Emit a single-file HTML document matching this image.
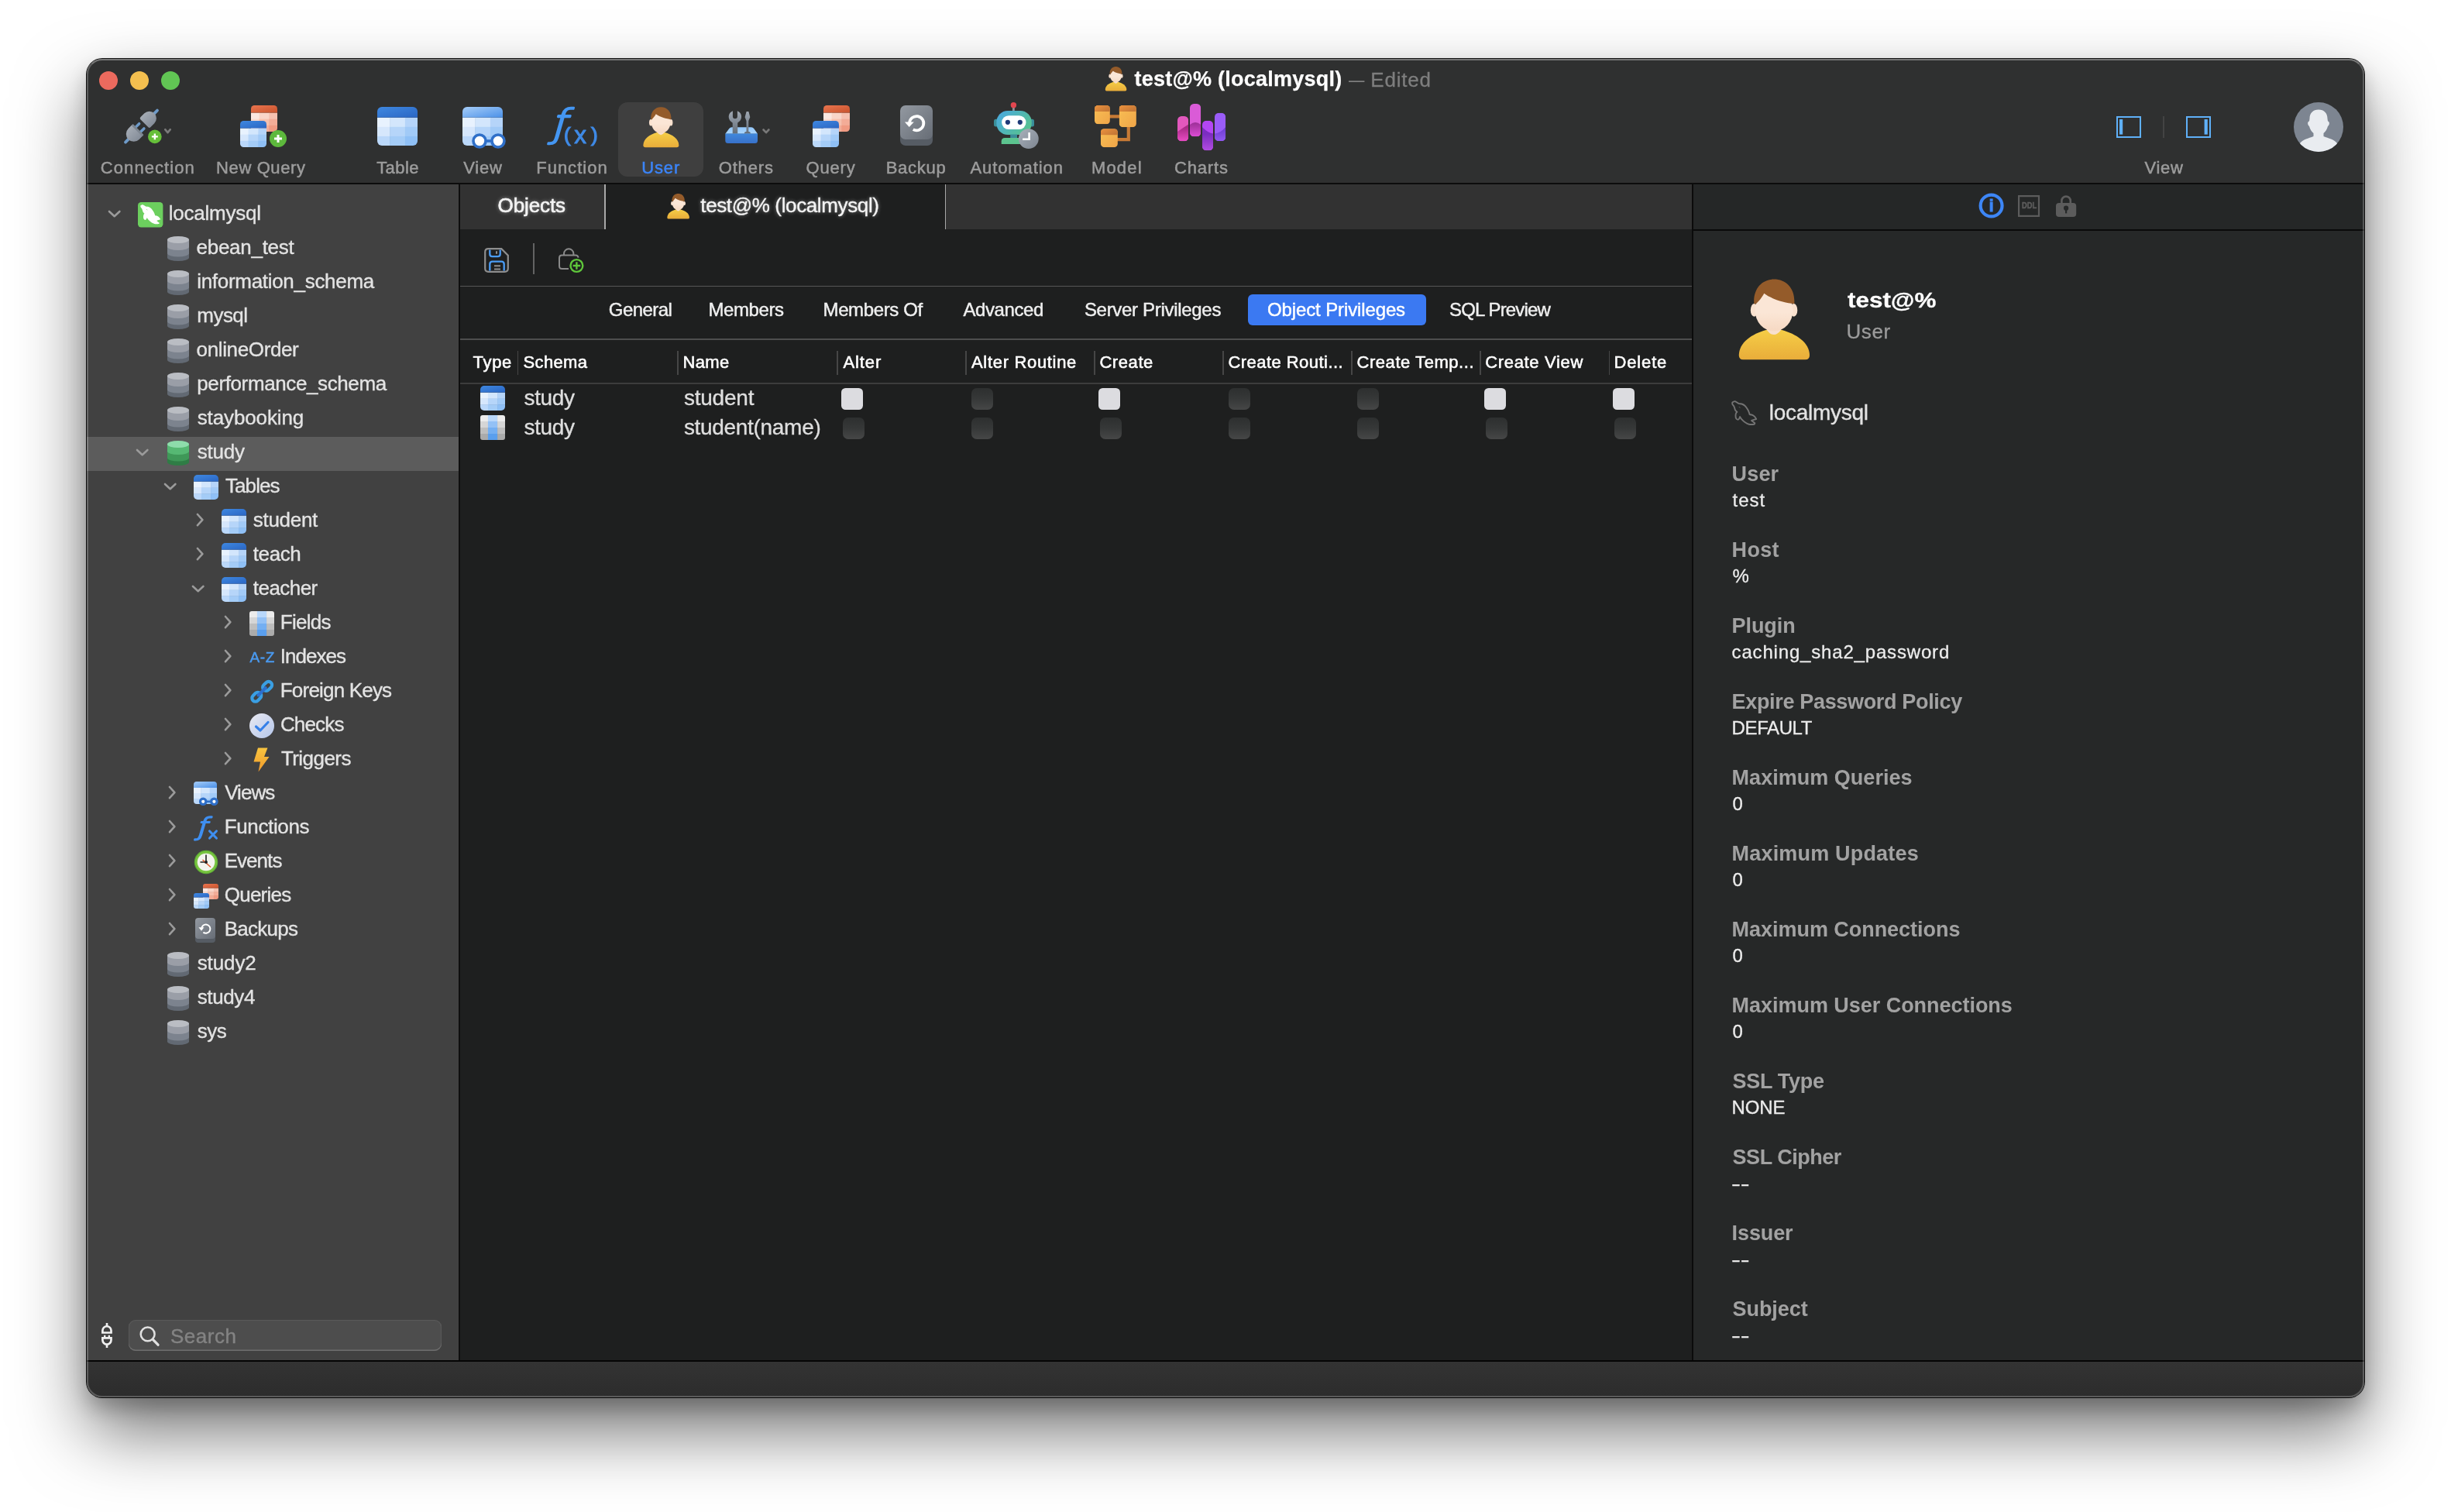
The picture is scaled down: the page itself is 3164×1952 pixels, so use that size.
<!DOCTYPE html>
<html lang="en"><head><meta charset="utf-8"><title>test@% (localmysql)</title>
<style>
html,body{margin:0;padding:0;background:#fff;}
body{width:3164px;height:1952px;position:relative;overflow:hidden;font-family:"Liberation Sans", sans-serif;}
.shadow{position:absolute;left:112px;top:76px;width:2940px;height:1728px;border-radius:20px;
 box-shadow:0 0 0 1px rgba(0,0,0,.92),0 44px 90px rgba(0,0,0,.55),0 14px 24px rgba(0,0,0,.2);}
.win{position:absolute;left:112px;top:76px;width:2940px;height:1728px;border-radius:20px;overflow:hidden;background:#2f3030;}
.in{will-change:transform;position:absolute;left:-112px;top:-76px;width:3164px;height:1952px;}
.edge{position:absolute;left:112px;top:76px;width:2940px;height:1728px;border-radius:20px;box-sizing:border-box;border:2px solid rgba(255,255,255,.22);border-top-color:rgba(255,255,255,.34);pointer-events:none;}
.r{position:absolute;}
.ic{position:absolute;overflow:visible;}
.t{position:absolute;white-space:pre;line-height:1;}
</style></head>
<body>
<div class="shadow"></div>
<div class="win"><div class="in">
<div class="r" style="left:112px;top:76px;width:2940px;height:160px;background:#2f3030;"></div>
<div class="r" style="left:112px;top:236px;width:2940px;height:2px;background:#0c0c0c;"></div>
<div class="r" style="left:112px;top:238px;width:480px;height:1520px;background:#414141;"></div>
<div class="r" style="left:592px;top:238px;width:2px;height:1520px;background:#0e0e0e;"></div>
<div class="r" style="left:594px;top:238px;width:1590px;height:58px;background:#323232;"></div>
<div class="r" style="left:594px;top:296px;width:1590px;height:1462px;background:#1e1f1f;"></div>
<div class="r" style="left:2184px;top:238px;width:2px;height:1520px;background:#0b0b0b;"></div>
<div class="r" style="left:2186px;top:238px;width:866px;height:58px;background:#252727;"></div>
<div class="r" style="left:2186px;top:296px;width:866px;height:2px;background:#0a0a0a;"></div>
<div class="r" style="left:2186px;top:298px;width:866px;height:1460px;background:#262828;"></div>
<div class="r" style="left:112px;top:1756px;width:2940px;height:2px;background:#050505;"></div>
<div class="r" style="left:112px;top:1758px;width:2940px;height:46px;background:linear-gradient(#333333,#2c2c2c);"></div>
<div class="r" style="left:128px;top:92px;width:24px;height:24px;background:#ec6a5e;border-radius:50%"></div>
<div class="r" style="left:168px;top:92px;width:24px;height:24px;background:#f4bf4f;border-radius:50%"></div>
<div class="r" style="left:208px;top:92px;width:24px;height:24px;background:#61c554;border-radius:50%"></div>
<svg class="ic" style="left:1425.5px;top:86.4px" width="29" height="31.4" viewBox="0 0 93 104.5" ><defs><linearGradient id="g1" x1="0" y1="0" x2="0" y2="1"><stop offset="0" stop-color="#f5cd46"/><stop offset="1" stop-color="#e9ad3a"/></linearGradient><linearGradient id="g2" x1="0" y1="0" x2="0" y2="1"><stop offset="0.55" stop-color="#fbe6d6"/><stop offset="1" stop-color="#f6d9c3"/></linearGradient></defs><path d="M6.1 104.5 Q0.8 104.5 0.8 99 C0.8 82 18 71 36 66 L56.5 66 C74.5 71 92.5 82 92.5 99 Q92.5 104.5 87 104.5 Z" fill="url(#g1)"/><path d="M37 58 V66 Q46.2 78.4 55.4 66 V58 Z" fill="#f8e0ce"/><ellipse cx="20.6" cy="40.4" rx="4.7" ry="8.4" fill="#f9e1ce"/><ellipse cx="72" cy="40.4" rx="4.7" ry="8.4" fill="#f9e1ce"/><ellipse cx="46.3" cy="40.5" rx="24.6" ry="27.2" fill="url(#g2)"/><path d="M20.4 32.2 C19 12 31 0.3 46.2 0.3 C62 0.3 74 12 72.7 32.2 C60 30.5 45 27 33.4 18.5 C31 23.5 26 29.5 22.7 32.2 Z" fill="#945b2a"/></svg>
<div class="r" style="left:798px;top:132px;width:110px;height:96px;background:#3f3f3f;border-radius:12px"></div>
<svg class="ic" style="left:160px;top:140px" width="64" height="48" viewBox="0 0 64 48" ><defs><linearGradient id="g3" x1="0" y1="0" x2="1" y2="0" gradientTransform="rotate(90)"><stop offset="0" stop-color="#a4abb4"/><stop offset="1" stop-color="#858d99"/></linearGradient></defs><g transform="translate(22.5,23.1) rotate(-45)"><path d="M-29 0 H-22 M22 0 H29" stroke="#6e9ac8" stroke-width="3.8" stroke-linecap="round"/><path d="M-5.5 -4.4 H0.4 M-5.5 4.4 H0.4" stroke="#6e9ac8" stroke-width="3.5" stroke-linecap="round"/><path d="M7.5 -9.1 L14.6 -9.1 A9.1 9.1 0 0 1 14.6 9.1 L7.5 9.1 Q5.5 9.1 5.5 7.1 L5.5 -7.1 Q5.5 -9.1 7.5 -9.1 Z" fill="url(#g3)"/><path d="M-7 -9.9 L-13.9 -9.9 A9.9 9.9 0 0 0 -13.9 9.9 L-7 9.9 Z" fill="url(#g3)"/><rect x="-8.3" y="-9.9" width="2.8" height="19.8" rx="0.8" fill="#7d8691"/></g><circle cx="39.85" cy="36.4" r="8.8" fill="#66bf3a"/><path d="M35.89 36.4 H43.81 M39.85 32.44 V40.36" stroke="#fff" stroke-width="2.38"/><path d="M53.2 27.2 L56.5 31.2 L59.8 27.2" fill="none" stroke="#7a7a7a" stroke-width="2.6" stroke-linecap="round" stroke-linejoin="round"/></svg>
<svg class="ic" style="left:309.8px;top:136px" width="62" height="56" viewBox="0 0 62 56" ><g transform="translate(14,0)"><defs><clipPath id="c4"><rect x="0" y="0" width="34" height="34" rx="4.5"/></clipPath><linearGradient id="g5" x1="0" y1="0" x2="1" y2="1"><stop offset="0" stop-color="#ea754f"/><stop offset="1" stop-color="#c8532d"/></linearGradient></defs><g clip-path="url(#c4)"><rect x="0.00" y="9.50" width="11.04" height="8.67" fill="#fbe7e0"/><rect x="10.54" y="9.50" width="13.42" height="8.67" fill="#f9d5c8"/><rect x="23.46" y="9.50" width="11.04" height="8.67" fill="#f6c1b0"/><rect x="0.00" y="17.67" width="11.04" height="8.67" fill="#f9d8cc"/><rect x="10.54" y="17.67" width="13.42" height="8.67" fill="#f6c0ae"/><rect x="23.46" y="17.67" width="11.04" height="8.67" fill="#f3ac97"/><rect x="0.00" y="25.83" width="11.04" height="8.67" fill="#f6c4b3"/><rect x="10.54" y="25.83" width="13.42" height="8.67" fill="#f3ad98"/><rect x="23.46" y="25.83" width="11.04" height="8.67" fill="#f09a82"/><rect x="0" y="0" width="34" height="9.5" fill="url(#g5)"/></g></g><g transform="translate(0,20)"><defs><clipPath id="c6"><rect x="0" y="0" width="34" height="34" rx="4.5"/></clipPath><linearGradient id="g7" x1="0" y1="0" x2="1" y2="1"><stop offset="0" stop-color="#3f88e0"/><stop offset="1" stop-color="#2a66c4"/></linearGradient></defs><g clip-path="url(#c6)"><rect x="0.00" y="9.50" width="11.04" height="8.67" fill="#e8f2fe"/><rect x="10.54" y="9.50" width="13.42" height="8.67" fill="#d3e6fc"/><rect x="23.46" y="9.50" width="11.04" height="8.67" fill="#b5d4f9"/><rect x="0.00" y="17.67" width="11.04" height="8.67" fill="#d6e7fc"/><rect x="10.54" y="17.67" width="13.42" height="8.67" fill="#b6d5f9"/><rect x="23.46" y="17.67" width="11.04" height="8.67" fill="#a1caf7"/><rect x="0.00" y="25.83" width="11.04" height="8.67" fill="#bbd8fa"/><rect x="10.54" y="25.83" width="13.42" height="8.67" fill="#a4ccf7"/><rect x="23.46" y="25.83" width="11.04" height="8.67" fill="#8fc0f6"/><rect x="0" y="0" width="34" height="9.5" fill="url(#g7)"/></g></g><circle cx="49" cy="43" r="11" fill="#5db83c"/><path d="M44.05 43 H53.95 M49 38.05 V47.95" stroke="#fff" stroke-width="2.97"/></svg>
<svg class="ic" style="left:487px;top:138px" width="52" height="50" viewBox="0 0 52 50" ><defs><clipPath id="c8"><rect x="0" y="0" width="52" height="50" rx="6"/></clipPath><linearGradient id="g9" x1="0" y1="0" x2="1" y2="1"><stop offset="0" stop-color="#3f88e0"/><stop offset="1" stop-color="#2a66c4"/></linearGradient></defs><g clip-path="url(#c8)"><rect x="0.00" y="13.70" width="16.62" height="12.60" fill="#e8f2fe"/><rect x="16.12" y="13.70" width="20.26" height="12.60" fill="#d3e6fc"/><rect x="35.88" y="13.70" width="16.62" height="12.60" fill="#b5d4f9"/><rect x="0.00" y="25.80" width="16.62" height="12.60" fill="#d6e7fc"/><rect x="16.12" y="25.80" width="20.26" height="12.60" fill="#b6d5f9"/><rect x="35.88" y="25.80" width="16.62" height="12.60" fill="#a1caf7"/><rect x="0.00" y="37.90" width="16.62" height="12.60" fill="#bbd8fa"/><rect x="16.12" y="37.90" width="20.26" height="12.60" fill="#a4ccf7"/><rect x="35.88" y="37.90" width="16.62" height="12.60" fill="#8fc0f6"/><rect x="0" y="0" width="52" height="13.7" fill="url(#g9)"/></g></svg>
<svg class="ic" style="left:597px;top:138px" width="58" height="56" viewBox="0 0 58 56" ><defs><clipPath id="c10"><rect x="0" y="0" width="52" height="50" rx="6"/></clipPath><linearGradient id="g11" x1="0" y1="0" x2="1" y2="1"><stop offset="0" stop-color="#a6cdf8"/><stop offset="1" stop-color="#4a90e8"/></linearGradient></defs><g clip-path="url(#c10)"><rect x="0.00" y="13.70" width="16.62" height="12.60" fill="#e8f2fe"/><rect x="16.12" y="13.70" width="20.26" height="12.60" fill="#d3e6fc"/><rect x="35.88" y="13.70" width="16.62" height="12.60" fill="#b5d4f9"/><rect x="0.00" y="25.80" width="16.62" height="12.60" fill="#d6e7fc"/><rect x="16.12" y="25.80" width="20.26" height="12.60" fill="#b6d5f9"/><rect x="35.88" y="25.80" width="16.62" height="12.60" fill="#a1caf7"/><rect x="0.00" y="37.90" width="16.62" height="12.60" fill="#bbd8fa"/><rect x="16.12" y="37.90" width="20.26" height="12.60" fill="#a4ccf7"/><rect x="35.88" y="37.90" width="16.62" height="12.60" fill="#8fc0f6"/><rect x="0" y="0" width="52" height="13.7" fill="url(#g11)"/></g><path d="M22 44 H46" stroke="#2f6fc8" stroke-width="3.6"/><circle cx="22" cy="44" r="8" fill="#fff" stroke="#2f6fc8" stroke-width="3.6"/><circle cx="46" cy="44" r="8" fill="#fff" stroke="#2f6fc8" stroke-width="3.6"/></svg>
<svg class="ic" style="left:705px;top:134px" width="68" height="58" viewBox="0 0 68 58" ><g transform="translate(5.4,42.4) scale(1.146,1)"><text x="0" y="0" font-family="DejaVu Sans Light, DejaVu Sans, sans-serif" font-weight="200" font-style="italic" font-size="49" fill="#4496f2" stroke="#4496f2" stroke-width="2.3" stroke-linejoin="round">ƒ</text></g><text x="23.1" y="48.7" font-family="Liberation Sans, sans-serif" font-size="26" fill="#3f8ae6" stroke="#3f8ae6" stroke-width="1.2">(</text><text x="36.2" y="50.5" font-family="Liberation Sans, sans-serif" font-size="31.5" fill="#3f8ae6" stroke="#3f8ae6" stroke-width="1.0" stroke-linejoin="round">x</text><text x="57.9" y="48.7" font-family="Liberation Sans, sans-serif" font-size="26" fill="#3f8ae6" stroke="#3f8ae6" stroke-width="1.2">)</text></svg>
<svg class="ic" style="left:829.7px;top:137.9px" width="46.6" height="52.4" viewBox="0 0 93 104.5" ><defs><linearGradient id="g12" x1="0" y1="0" x2="0" y2="1"><stop offset="0" stop-color="#f5cd46"/><stop offset="1" stop-color="#e9ad3a"/></linearGradient><linearGradient id="g13" x1="0" y1="0" x2="0" y2="1"><stop offset="0.55" stop-color="#fbe6d6"/><stop offset="1" stop-color="#f6d9c3"/></linearGradient></defs><path d="M6.1 104.5 Q0.8 104.5 0.8 99 C0.8 82 18 71 36 66 L56.5 66 C74.5 71 92.5 82 92.5 99 Q92.5 104.5 87 104.5 Z" fill="url(#g12)"/><path d="M37 58 V66 Q46.2 78.4 55.4 66 V58 Z" fill="#f8e0ce"/><ellipse cx="20.6" cy="40.4" rx="4.7" ry="8.4" fill="#f9e1ce"/><ellipse cx="72" cy="40.4" rx="4.7" ry="8.4" fill="#f9e1ce"/><ellipse cx="46.3" cy="40.5" rx="24.6" ry="27.2" fill="url(#g13)"/><path d="M20.4 32.2 C19 12 31 0.3 46.2 0.3 C62 0.3 74 12 72.7 32.2 C60 30.5 45 27 33.4 18.5 C31 23.5 26 29.5 22.7 32.2 Z" fill="#945b2a"/></svg>
<svg class="ic" style="left:935.7px;top:142.9px" width="60" height="44" viewBox="0 0 60 44" ><defs><linearGradient id="g14" x1="0" y1="0" x2="0" y2="1"><stop offset="0" stop-color="#4088dc"/><stop offset="1" stop-color="#3871ca"/></linearGradient><linearGradient id="g15" gradientUnits="userSpaceOnUse" x1="0" y1="0" x2="0" y2="30"><stop offset="0" stop-color="#a1a9b3"/><stop offset="1" stop-color="#626d79"/></linearGradient><linearGradient id="g16" x1="0" y1="0" x2="0" y2="1"><stop offset="0" stop-color="#93c6f8"/><stop offset="1" stop-color="#abd7fd"/></linearGradient></defs><path d="M8.6 21.3 H33.9 Q36 21.3 37.2 23 L42 29.8 H0.3 L5.3 23 Q6.5 21.3 8.6 21.3 Z" fill="url(#g16)"/><path d="M15.9 0.17 A8.2 8.2 0 1 1 9.9 0.17 L9.9 7.3 A3 3 0 0 0 15.9 7.3 Z" fill="url(#g15)"/><rect x="9.7" y="13" width="6.5" height="16.6" fill="url(#g15)"/><path d="M27.6 0.9 H30.4 L32.3 8.2 L30.3 12.9 V26.8 Q32.8 27 33.1 29.6 H24.5 Q25 27 27.5 26.8 V12.9 L25.6 8.2 Z" fill="url(#g15)"/><path d="M0.3 29.4 H42 V38.6 Q42 42.1 38.5 42.1 H3.8 Q0.3 42.1 0.3 38.6 Z" fill="url(#g14)"/><path d="M49.5 24.5 L53 28.2 L56.4 24.5" fill="none" stroke="#787878" stroke-width="2.6" stroke-linecap="round" stroke-linejoin="round"/></svg>
<svg class="ic" style="left:1049px;top:136px" width="62" height="56" viewBox="0 0 62 56" ><g transform="translate(14,0)"><defs><clipPath id="c17"><rect x="0" y="0" width="34" height="34" rx="4.5"/></clipPath><linearGradient id="g18" x1="0" y1="0" x2="1" y2="1"><stop offset="0" stop-color="#ea754f"/><stop offset="1" stop-color="#c8532d"/></linearGradient></defs><g clip-path="url(#c17)"><rect x="0.00" y="9.50" width="11.04" height="8.67" fill="#fbe7e0"/><rect x="10.54" y="9.50" width="13.42" height="8.67" fill="#f9d5c8"/><rect x="23.46" y="9.50" width="11.04" height="8.67" fill="#f6c1b0"/><rect x="0.00" y="17.67" width="11.04" height="8.67" fill="#f9d8cc"/><rect x="10.54" y="17.67" width="13.42" height="8.67" fill="#f6c0ae"/><rect x="23.46" y="17.67" width="11.04" height="8.67" fill="#f3ac97"/><rect x="0.00" y="25.83" width="11.04" height="8.67" fill="#f6c4b3"/><rect x="10.54" y="25.83" width="13.42" height="8.67" fill="#f3ad98"/><rect x="23.46" y="25.83" width="11.04" height="8.67" fill="#f09a82"/><rect x="0" y="0" width="34" height="9.5" fill="url(#g18)"/></g></g><g transform="translate(0,20)"><defs><clipPath id="c19"><rect x="0" y="0" width="34" height="34" rx="4.5"/></clipPath><linearGradient id="g20" x1="0" y1="0" x2="1" y2="1"><stop offset="0" stop-color="#3f88e0"/><stop offset="1" stop-color="#2a66c4"/></linearGradient></defs><g clip-path="url(#c19)"><rect x="0.00" y="9.50" width="11.04" height="8.67" fill="#e8f2fe"/><rect x="10.54" y="9.50" width="13.42" height="8.67" fill="#d3e6fc"/><rect x="23.46" y="9.50" width="11.04" height="8.67" fill="#b5d4f9"/><rect x="0.00" y="17.67" width="11.04" height="8.67" fill="#d6e7fc"/><rect x="10.54" y="17.67" width="13.42" height="8.67" fill="#b6d5f9"/><rect x="23.46" y="17.67" width="11.04" height="8.67" fill="#a1caf7"/><rect x="0.00" y="25.83" width="11.04" height="8.67" fill="#bbd8fa"/><rect x="10.54" y="25.83" width="13.42" height="8.67" fill="#a4ccf7"/><rect x="23.46" y="25.83" width="11.04" height="8.67" fill="#8fc0f6"/><rect x="0" y="0" width="34" height="9.5" fill="url(#g20)"/></g></g></svg>
<svg class="ic" style="left:1162px;top:135.8px" width="42" height="52" viewBox="0 0 42 52" ><defs><linearGradient id="g21" x1="0" y1="0" x2="1" y2="1"><stop offset="0" stop-color="#9399a1"/><stop offset="1" stop-color="#676d76"/></linearGradient></defs><rect x="0" y="6" width="42" height="46" rx="7" fill="#565c64"/><rect x="0" y="0" width="42" height="44" rx="7" fill="url(#g21)"/><path d="M12.05 23.2 A9.15 9.15 0 1 1 16.76 31.2" fill="none" stroke="#fff" stroke-width="3.7"/><path d="M5.9 21.4 L17.8 21.4 L11.7 28 Z" fill="#fff"/></svg>
<svg class="ic" style="left:1283px;top:132px" width="60" height="62" viewBox="0 0 60 62" ><defs><linearGradient id="g22" x1="0" y1="0.2" x2="1" y2="0.8"><stop offset="0" stop-color="#4aaadc"/><stop offset="1" stop-color="#58c48a"/></linearGradient><linearGradient id="g23" x1="0" y1="0" x2="1" y2="1"><stop offset="0" stop-color="#a9b1bb"/><stop offset="1" stop-color="#7d8590"/></linearGradient></defs><rect x="24" y="6" width="2.8" height="6" fill="#8a939c"/><circle cx="25.4" cy="3.7" r="3.7" fill="#e2464f"/><rect x="0" y="21.8" width="6" height="9.6" rx="2.5" fill="#3a8f9b"/><rect x="46" y="21.8" width="6" height="9.6" rx="2.5" fill="#3a8f9b"/><rect x="3.4" y="11.1" width="45.3" height="30.9" rx="14.5" fill="url(#g22)"/><rect x="10.1" y="17.2" width="31.4" height="17.8" rx="8.9" fill="#fff"/><circle cx="17.9" cy="25.8" r="3.1" fill="#1f3a78"/><circle cx="33.8" cy="25.8" r="3.1" fill="#1f3a78"/><rect x="21.2" y="41.5" width="8.9" height="5" fill="#3c8c98"/><path d="M9.7 54 V50.5 Q9.7 46 14.2 46 H35 V54 Z" fill="#5cc48f"/><circle cx="44.8" cy="47.2" r="12.9" fill="url(#g23)"/><path d="M37.1 47.8 H45.6 V39.1" fill="none" stroke="#fff" stroke-width="2.6"/></svg>
<svg class="ic" style="left:1413.2px;top:135.8px" width="54" height="54.4" viewBox="0 0 54 54.4" ><path d="M18 14.3 H34 M43.8 26 V44.1 H28" fill="none" stroke="#c77a35" stroke-width="4.2"/><defs><linearGradient id="g24" x1="0" y1="0" x2="1" y2="1"><stop offset="0" stop-color="#f8bf54"/><stop offset="1" stop-color="#f0a548"/></linearGradient><linearGradient id="g25" x1="0" y1="0" x2="1" y2="0.6"><stop offset="0" stop-color="#ec923e"/><stop offset="1" stop-color="#c67836"/></linearGradient><clipPath id="c26"><rect x="0" y="0" width="19.9" height="24.3" rx="4.6"/></clipPath></defs><g clip-path="url(#c26)"><rect x="0" y="0" width="19.9" height="24.3" fill="url(#g24)"/><rect x="0" y="0" width="19.9" height="8" fill="url(#g25)"/></g><defs><linearGradient id="g27" x1="0" y1="0" x2="1" y2="1"><stop offset="0" stop-color="#f8bf54"/><stop offset="1" stop-color="#f0a548"/></linearGradient><linearGradient id="g28" x1="0" y1="0" x2="1" y2="0.6"><stop offset="0" stop-color="#ec923e"/><stop offset="1" stop-color="#c67836"/></linearGradient><clipPath id="c29"><rect x="31.7" y="0" width="22.2" height="28.2" rx="4.6"/></clipPath></defs><g clip-path="url(#c29)"><rect x="31.7" y="0" width="22.2" height="28.2" fill="url(#g27)"/><rect x="31.7" y="0" width="22.2" height="8" fill="url(#g28)"/></g><defs><linearGradient id="g30" x1="0" y1="0" x2="1" y2="1"><stop offset="0" stop-color="#f8bf54"/><stop offset="1" stop-color="#f0a548"/></linearGradient><linearGradient id="g31" x1="0" y1="0" x2="1" y2="0.6"><stop offset="0" stop-color="#ec923e"/><stop offset="1" stop-color="#c67836"/></linearGradient><clipPath id="c32"><rect x="7.9" y="30.2" width="22" height="24" rx="4.6"/></clipPath></defs><g clip-path="url(#c32)"><rect x="7.9" y="30.2" width="22" height="24" fill="url(#g30)"/><rect x="7.9" y="30.2" width="22" height="8" fill="url(#g31)"/></g></svg>
<svg class="ic" style="left:1520px;top:134px" width="62.4" height="60.4" viewBox="0 0 62.4 60.4" ><defs><linearGradient id="g33" gradientUnits="userSpaceOnUse" x1="0" y1="30.5" x2="0" y2="48.2"><stop offset="0" stop-color="#a92a86"/><stop offset="1" stop-color="#ea4cc4"/></linearGradient><clipPath id="c34"><rect x="0" y="16" width="14.2" height="32.2" rx="5.2"/></clipPath></defs><g clip-path="url(#c34)"><rect x="0" y="16" width="14.2" height="32.2" fill="#e258bd"/><path d="M0 36 L14.2 26.5 V48.2 H0 Z" fill="url(#g33)"/></g><defs><linearGradient id="g35" gradientUnits="userSpaceOnUse" x1="0" y1="39.1" x2="0" y2="60.2"><stop offset="0" stop-color="#7b2dc0"/><stop offset="1" stop-color="#b24ce2"/></linearGradient><clipPath id="c36"><rect x="32" y="21.8" width="14.1" height="38.4" rx="5.2"/></clipPath></defs><g clip-path="url(#c36)"><rect x="32" y="21.8" width="14.1" height="38.4" fill="#b446f3"/><path d="M32 30.2 Q40 38 46.1 38.4 V60.2 H32 Z" fill="url(#g35)"/></g><defs><linearGradient id="g37" gradientUnits="userSpaceOnUse" x1="0" y1="19.0" x2="0" y2="42.2"><stop offset="0" stop-color="#8a2886"/><stop offset="1" stop-color="#dc4cd4"/></linearGradient><clipPath id="c38"><rect x="16" y="0" width="14.2" height="42.2" rx="5.2"/></clipPath></defs><g clip-path="url(#c38)"><rect x="16" y="0" width="14.2" height="42.2" fill="#da5bd7"/><path d="M16 27 Q23.1 21.2 30.2 27 V42.2 H16 Z" fill="url(#g37)"/></g><defs><linearGradient id="g39" gradientUnits="userSpaceOnUse" x1="0" y1="28.1" x2="0" y2="48.1"><stop offset="0" stop-color="#6538c8"/><stop offset="1" stop-color="#9158f2"/></linearGradient><clipPath id="c40"><rect x="48" y="11.8" width="14.2" height="36.3" rx="5.2"/></clipPath></defs><g clip-path="url(#c40)"><rect x="48" y="11.8" width="14.2" height="36.3" fill="#9a5cf8"/><path d="M48 38.5 Q55.5 38 62.2 30 V48.1 H48 Z" fill="url(#g39)"/></g></svg>
<svg class="ic" style="left:2731.9px;top:150.2px" width="32" height="28" viewBox="0 0 32 28" ><rect x="1" y="1" width="30" height="26" fill="none" stroke="#5fb0f8" stroke-width="2"/><rect x="4" y="4" width="4.2" height="19.6" fill="#5fb0f8"/></svg>
<div class="r" style="left:2792px;top:150px;width:1.5px;height:28px;background:#434343;"></div>
<svg class="ic" style="left:2821.7px;top:150.2px" width="32" height="28" viewBox="0 0 32 28" ><rect x="1" y="1" width="30" height="26" fill="none" stroke="#5fb0f8" stroke-width="2"/><rect x="23.6" y="4" width="4.2" height="19.6" fill="#5fb0f8"/></svg>
<svg class="ic" style="left:2961px;top:132px" width="64" height="64" viewBox="0 0 64 64" ><defs><clipPath id="c41"><circle cx="32" cy="32" r="32"/></clipPath></defs><circle cx="32" cy="32" r="32" fill="#7d8591"/><g clip-path="url(#c41)"><path d="M32 9.5 C39 9.5 43.5 14 43.5 21 L44 24.5 C46.5 25 46.5 29 44 31 C43 35 41 38 38.5 40 V44 C45 46.5 52 48 56 53 L60 66 H4 L8 53 C12 48 19 46.5 25.5 44 V40 C23 38 21 35 20 31 C17.5 29 17.5 25 20 24.5 L20.5 21 C20.5 14 25 9.5 32 9.5 Z" fill="#e9ecf0"/></g></svg>
<div class="r" style="left:112px;top:564px;width:480px;height:44px;background:#5c5c5c;"></div>
<svg class="ic" style="left:139.3px;top:271.4px" width="17.4" height="12.2" viewBox="0 0 17.4 12.2" ><path d="M2 2 L8.7 8.2 L15.4 2" fill="none" stroke="#9b9b9b" stroke-width="2.6" stroke-linecap="round" stroke-linejoin="round"/></svg>
<svg class="ic" style="left:177.8px;top:260.8px" width="32.4" height="32.4" viewBox="0 0 32.4 32.4" ><rect width="32.4" height="32.4" rx="4.2" fill="#6ccf5e"/><g transform="translate(3.4,3.2)"><path d="M18.79 14.17 C19.30 14.27 20.95 14.34 21.89 14.76 C22.83 15.18 23.72 15.96 24.41 16.69 C25.09 17.42 25.73 18.72 26.00 19.12 C25.13 19.39 21.67 20.45 20.80 20.72 C21.40 21.19 23.81 23.09 24.41 23.57 C24.27 23.76 24.63 24.55 23.57 24.74 C22.51 24.94 19.70 25.12 18.03 24.74 C16.37 24.36 14.89 23.36 13.59 22.48 C12.29 21.60 11.11 20.42 10.23 19.46 C9.35 18.49 8.62 17.15 8.30 16.69 C8.12 17.10 7.63 18.62 7.21 19.12 C6.79 19.63 6.30 19.84 5.79 19.71 C5.27 19.58 4.47 19.11 4.11 18.37 C3.75 17.63 3.61 16.20 3.61 15.26 C3.61 14.33 3.84 13.39 4.11 12.75 C4.38 12.11 5.02 11.63 5.20 11.41 C4.88 11.08 3.82 10.46 3.27 9.48 C2.73 8.50 2.43 6.56 1.93 5.54 C1.43 4.52 0.57 4.00 0.25 3.35 C-0.07 2.71 -0.04 2.10 0.00 1.68 C0.04 1.26 -0.00 1.12 0.50 0.84 C1.01 0.56 1.96 -0.24 3.02 0.00 C4.08 0.24 5.68 1.80 6.88 2.26 C8.08 2.73 9.11 2.36 10.23 2.77 C11.35 3.17 12.57 3.77 13.59 4.70 C14.61 5.62 15.61 7.14 16.35 8.30 C17.10 9.46 17.63 10.68 18.03 11.66 C18.44 12.64 18.66 13.75 18.79 14.17 Z" fill="#fff"/><path d="M7.0 5.6 Q8.6 5.7 9.2 7.6 Q8.0 6.6 7.0 5.6 Z" fill="#6ccf5e"/></g></svg>
<svg class="ic" style="left:216px;top:305px" width="28" height="32" viewBox="0 0 28 32" ><path d="M0 22 V27.5 A14 4.5 0 0 0 28 27.5 V22 Z" fill="#626973"/><path d="M0 13 V22 A14 4.5 0 0 0 28 22 V13 Z" fill="#7c838e"/><path d="M0 4.5 V13.5 A14 4.5 0 0 0 28 13.5 V4.5 Z" fill="#9a9ea7"/><ellipse cx="14" cy="4.5" rx="14" ry="4.5" fill="#babdc3"/></svg>
<svg class="ic" style="left:216px;top:349px" width="28" height="32" viewBox="0 0 28 32" ><path d="M0 22 V27.5 A14 4.5 0 0 0 28 27.5 V22 Z" fill="#626973"/><path d="M0 13 V22 A14 4.5 0 0 0 28 22 V13 Z" fill="#7c838e"/><path d="M0 4.5 V13.5 A14 4.5 0 0 0 28 13.5 V4.5 Z" fill="#9a9ea7"/><ellipse cx="14" cy="4.5" rx="14" ry="4.5" fill="#babdc3"/></svg>
<svg class="ic" style="left:216px;top:393px" width="28" height="32" viewBox="0 0 28 32" ><path d="M0 22 V27.5 A14 4.5 0 0 0 28 27.5 V22 Z" fill="#626973"/><path d="M0 13 V22 A14 4.5 0 0 0 28 22 V13 Z" fill="#7c838e"/><path d="M0 4.5 V13.5 A14 4.5 0 0 0 28 13.5 V4.5 Z" fill="#9a9ea7"/><ellipse cx="14" cy="4.5" rx="14" ry="4.5" fill="#babdc3"/></svg>
<svg class="ic" style="left:216px;top:437px" width="28" height="32" viewBox="0 0 28 32" ><path d="M0 22 V27.5 A14 4.5 0 0 0 28 27.5 V22 Z" fill="#626973"/><path d="M0 13 V22 A14 4.5 0 0 0 28 22 V13 Z" fill="#7c838e"/><path d="M0 4.5 V13.5 A14 4.5 0 0 0 28 13.5 V4.5 Z" fill="#9a9ea7"/><ellipse cx="14" cy="4.5" rx="14" ry="4.5" fill="#babdc3"/></svg>
<svg class="ic" style="left:216px;top:481px" width="28" height="32" viewBox="0 0 28 32" ><path d="M0 22 V27.5 A14 4.5 0 0 0 28 27.5 V22 Z" fill="#626973"/><path d="M0 13 V22 A14 4.5 0 0 0 28 22 V13 Z" fill="#7c838e"/><path d="M0 4.5 V13.5 A14 4.5 0 0 0 28 13.5 V4.5 Z" fill="#9a9ea7"/><ellipse cx="14" cy="4.5" rx="14" ry="4.5" fill="#babdc3"/></svg>
<svg class="ic" style="left:216px;top:525px" width="28" height="32" viewBox="0 0 28 32" ><path d="M0 22 V27.5 A14 4.5 0 0 0 28 27.5 V22 Z" fill="#626973"/><path d="M0 13 V22 A14 4.5 0 0 0 28 22 V13 Z" fill="#7c838e"/><path d="M0 4.5 V13.5 A14 4.5 0 0 0 28 13.5 V4.5 Z" fill="#9a9ea7"/><ellipse cx="14" cy="4.5" rx="14" ry="4.5" fill="#babdc3"/></svg>
<svg class="ic" style="left:175.3px;top:579.4px" width="17.4" height="12.2" viewBox="0 0 17.4 12.2" ><path d="M2 2 L8.7 8.2 L15.4 2" fill="none" stroke="#9b9b9b" stroke-width="2.6" stroke-linecap="round" stroke-linejoin="round"/></svg>
<svg class="ic" style="left:216px;top:569px" width="28" height="32" viewBox="0 0 28 32" ><path d="M0 22 V27.5 A14 4.5 0 0 0 28 27.5 V22 Z" fill="#2f7c45"/><path d="M0 13 V22 A14 4.5 0 0 0 28 22 V13 Z" fill="#3f9858"/><path d="M0 4.5 V13.5 A14 4.5 0 0 0 28 13.5 V4.5 Z" fill="#56b873"/><ellipse cx="14" cy="4.5" rx="14" ry="4.5" fill="#8edcab"/></svg>
<svg class="ic" style="left:211.3px;top:623.4px" width="17.4" height="12.2" viewBox="0 0 17.4 12.2" ><path d="M2 2 L8.7 8.2 L15.4 2" fill="none" stroke="#9b9b9b" stroke-width="2.6" stroke-linecap="round" stroke-linejoin="round"/></svg>
<svg class="ic" style="left:250px;top:613px" width="32" height="32" viewBox="0 0 32 32" ><defs><clipPath id="c42"><rect x="0" y="0" width="32" height="32" rx="5"/></clipPath><linearGradient id="g43" x1="0" y1="0" x2="1" y2="1"><stop offset="0" stop-color="#3f88e0"/><stop offset="1" stop-color="#2a66c4"/></linearGradient></defs><g clip-path="url(#c42)"><rect x="0.00" y="8.64" width="10.42" height="8.29" fill="#e8f2fe"/><rect x="9.92" y="8.64" width="12.66" height="8.29" fill="#d3e6fc"/><rect x="22.08" y="8.64" width="10.42" height="8.29" fill="#b5d4f9"/><rect x="0.00" y="16.43" width="10.42" height="8.29" fill="#d6e7fc"/><rect x="9.92" y="16.43" width="12.66" height="8.29" fill="#b6d5f9"/><rect x="22.08" y="16.43" width="10.42" height="8.29" fill="#a1caf7"/><rect x="0.00" y="24.21" width="10.42" height="8.29" fill="#bbd8fa"/><rect x="9.92" y="24.21" width="12.66" height="8.29" fill="#a4ccf7"/><rect x="22.08" y="24.21" width="10.42" height="8.29" fill="#8fc0f6"/><rect x="0" y="0" width="32" height="8.64" fill="url(#g43)"/></g></svg>
<svg class="ic" style="left:252.7px;top:662.3px" width="12.4" height="18.2" viewBox="0 0 12.4 18.2" ><path d="M2 2 L8.4 9.1 L2 16.2" fill="none" stroke="#9b9b9b" stroke-width="2.6" stroke-linecap="round" stroke-linejoin="round"/></svg>
<svg class="ic" style="left:286px;top:657px" width="32" height="32" viewBox="0 0 32 32" ><defs><clipPath id="c44"><rect x="0" y="0" width="32" height="32" rx="5"/></clipPath><linearGradient id="g45" x1="0" y1="0" x2="1" y2="1"><stop offset="0" stop-color="#3f88e0"/><stop offset="1" stop-color="#2a66c4"/></linearGradient></defs><g clip-path="url(#c44)"><rect x="0.00" y="8.64" width="10.42" height="8.29" fill="#e8f2fe"/><rect x="9.92" y="8.64" width="12.66" height="8.29" fill="#d3e6fc"/><rect x="22.08" y="8.64" width="10.42" height="8.29" fill="#b5d4f9"/><rect x="0.00" y="16.43" width="10.42" height="8.29" fill="#d6e7fc"/><rect x="9.92" y="16.43" width="12.66" height="8.29" fill="#b6d5f9"/><rect x="22.08" y="16.43" width="10.42" height="8.29" fill="#a1caf7"/><rect x="0.00" y="24.21" width="10.42" height="8.29" fill="#bbd8fa"/><rect x="9.92" y="24.21" width="12.66" height="8.29" fill="#a4ccf7"/><rect x="22.08" y="24.21" width="10.42" height="8.29" fill="#8fc0f6"/><rect x="0" y="0" width="32" height="8.64" fill="url(#g45)"/></g></svg>
<svg class="ic" style="left:252.7px;top:706.3px" width="12.4" height="18.2" viewBox="0 0 12.4 18.2" ><path d="M2 2 L8.4 9.1 L2 16.2" fill="none" stroke="#9b9b9b" stroke-width="2.6" stroke-linecap="round" stroke-linejoin="round"/></svg>
<svg class="ic" style="left:286px;top:701px" width="32" height="32" viewBox="0 0 32 32" ><defs><clipPath id="c46"><rect x="0" y="0" width="32" height="32" rx="5"/></clipPath><linearGradient id="g47" x1="0" y1="0" x2="1" y2="1"><stop offset="0" stop-color="#3f88e0"/><stop offset="1" stop-color="#2a66c4"/></linearGradient></defs><g clip-path="url(#c46)"><rect x="0.00" y="8.64" width="10.42" height="8.29" fill="#e8f2fe"/><rect x="9.92" y="8.64" width="12.66" height="8.29" fill="#d3e6fc"/><rect x="22.08" y="8.64" width="10.42" height="8.29" fill="#b5d4f9"/><rect x="0.00" y="16.43" width="10.42" height="8.29" fill="#d6e7fc"/><rect x="9.92" y="16.43" width="12.66" height="8.29" fill="#b6d5f9"/><rect x="22.08" y="16.43" width="10.42" height="8.29" fill="#a1caf7"/><rect x="0.00" y="24.21" width="10.42" height="8.29" fill="#bbd8fa"/><rect x="9.92" y="24.21" width="12.66" height="8.29" fill="#a4ccf7"/><rect x="22.08" y="24.21" width="10.42" height="8.29" fill="#8fc0f6"/><rect x="0" y="0" width="32" height="8.64" fill="url(#g47)"/></g></svg>
<svg class="ic" style="left:247.3px;top:755.4px" width="17.4" height="12.2" viewBox="0 0 17.4 12.2" ><path d="M2 2 L8.7 8.2 L15.4 2" fill="none" stroke="#9b9b9b" stroke-width="2.6" stroke-linecap="round" stroke-linejoin="round"/></svg>
<svg class="ic" style="left:286px;top:745px" width="32" height="32" viewBox="0 0 32 32" ><defs><clipPath id="c48"><rect x="0" y="0" width="32" height="32" rx="5"/></clipPath><linearGradient id="g49" x1="0" y1="0" x2="1" y2="1"><stop offset="0" stop-color="#3f88e0"/><stop offset="1" stop-color="#2a66c4"/></linearGradient></defs><g clip-path="url(#c48)"><rect x="0.00" y="8.64" width="10.42" height="8.29" fill="#e8f2fe"/><rect x="9.92" y="8.64" width="12.66" height="8.29" fill="#d3e6fc"/><rect x="22.08" y="8.64" width="10.42" height="8.29" fill="#b5d4f9"/><rect x="0.00" y="16.43" width="10.42" height="8.29" fill="#d6e7fc"/><rect x="9.92" y="16.43" width="12.66" height="8.29" fill="#b6d5f9"/><rect x="22.08" y="16.43" width="10.42" height="8.29" fill="#a1caf7"/><rect x="0.00" y="24.21" width="10.42" height="8.29" fill="#bbd8fa"/><rect x="9.92" y="24.21" width="12.66" height="8.29" fill="#a4ccf7"/><rect x="22.08" y="24.21" width="10.42" height="8.29" fill="#8fc0f6"/><rect x="0" y="0" width="32" height="8.64" fill="url(#g49)"/></g></svg>
<svg class="ic" style="left:288.7px;top:794.3px" width="12.4" height="18.2" viewBox="0 0 12.4 18.2" ><path d="M2 2 L8.4 9.1 L2 16.2" fill="none" stroke="#9b9b9b" stroke-width="2.6" stroke-linecap="round" stroke-linejoin="round"/></svg>
<svg class="ic" style="left:322px;top:789px" width="32" height="32" viewBox="0 0 32 32" ><defs><clipPath id="c50"><rect width="32" height="32" rx="3"/></clipPath></defs><g clip-path="url(#c50)"><rect x="0.00" y="0.00" width="10.32" height="8.40" fill="#ececec"/><rect x="9.92" y="0.00" width="12.56" height="8.40" fill="#b9d8fb"/><rect x="22.08" y="0.00" width="10.32" height="8.40" fill="#ececec"/><rect x="0.00" y="8.00" width="10.32" height="8.40" fill="#d6d6d6"/><rect x="9.92" y="8.00" width="12.56" height="8.40" fill="#93c1f6"/><rect x="22.08" y="8.00" width="10.32" height="8.40" fill="#d6d6d6"/><rect x="0.00" y="16.00" width="10.32" height="8.40" fill="#bebebe"/><rect x="9.92" y="16.00" width="12.56" height="8.40" fill="#74aff2"/><rect x="22.08" y="16.00" width="10.32" height="8.40" fill="#bebebe"/><rect x="0.00" y="24.00" width="10.32" height="8.40" fill="#ababab"/><rect x="9.92" y="24.00" width="12.56" height="8.40" fill="#5a9fee"/><rect x="22.08" y="24.00" width="10.32" height="8.40" fill="#ababab"/></g></svg>
<svg class="ic" style="left:288.7px;top:838.3px" width="12.4" height="18.2" viewBox="0 0 12.4 18.2" ><path d="M2 2 L8.4 9.1 L2 16.2" fill="none" stroke="#9b9b9b" stroke-width="2.6" stroke-linecap="round" stroke-linejoin="round"/></svg>
<svg class="ic" style="left:322px;top:833px" width="36" height="32" viewBox="0 0 36 32" ><text x="0.5" y="22" font-family="Liberation Sans, sans-serif" font-size="19" fill="#4a9af0" stroke="#4a9af0" stroke-width="0.5" letter-spacing="0.6">A-Z</text></svg>
<svg class="ic" style="left:288.7px;top:882.3px" width="12.4" height="18.2" viewBox="0 0 12.4 18.2" ><path d="M2 2 L8.4 9.1 L2 16.2" fill="none" stroke="#9b9b9b" stroke-width="2.6" stroke-linecap="round" stroke-linejoin="round"/></svg>
<svg class="ic" style="left:322px;top:877px" width="32" height="32" viewBox="0 0 32 32" ><g transform="translate(16.2,15.8) rotate(-45)" fill="none"><rect x="-16.4" y="-4.4" width="13.2" height="8.8" rx="4.4" stroke="#3a9fe3" stroke-width="4.2"/><rect x="3.2" y="-4.4" width="13.2" height="8.8" rx="4.4" stroke="#3a9fe3" stroke-width="4.2"/><path d="M-6.6 0 H6.6" stroke="#2c6fce" stroke-width="4" stroke-linecap="round"/></g></svg>
<svg class="ic" style="left:288.7px;top:926.3px" width="12.4" height="18.2" viewBox="0 0 12.4 18.2" ><path d="M2 2 L8.4 9.1 L2 16.2" fill="none" stroke="#9b9b9b" stroke-width="2.6" stroke-linecap="round" stroke-linejoin="round"/></svg>
<svg class="ic" style="left:322px;top:921px" width="32" height="32" viewBox="0 0 32 32" ><defs><linearGradient id="g51" x1="0" y1="0" x2="1" y2="1"><stop offset="0" stop-color="#eaeaf2"/><stop offset="1" stop-color="#b4c6ea"/></linearGradient></defs><circle cx="16" cy="16" r="16" fill="url(#g51)"/><path d="M8.5 17 L14 22 L24 11.5" fill="none" stroke="#3680e8" stroke-width="3.2" stroke-linecap="round" stroke-linejoin="round"/></svg>
<svg class="ic" style="left:288.7px;top:970.3px" width="12.4" height="18.2" viewBox="0 0 12.4 18.2" ><path d="M2 2 L8.4 9.1 L2 16.2" fill="none" stroke="#9b9b9b" stroke-width="2.6" stroke-linecap="round" stroke-linejoin="round"/></svg>
<svg class="ic" style="left:322px;top:965px" width="32" height="32" viewBox="0 0 32 32" ><defs><linearGradient id="g52" x1="0" y1="0" x2="0" y2="1"><stop offset="0" stop-color="#f8c440"/><stop offset="1" stop-color="#f09a2a"/></linearGradient></defs><path d="M11 0.5 L23.5 0.5 L19 12 L25.5 12 L11.5 31.5 L14 18.5 L5.5 18.5 Z" fill="url(#g52)"/></svg>
<svg class="ic" style="left:216.7px;top:1014.3px" width="12.4" height="18.2" viewBox="0 0 12.4 18.2" ><path d="M2 2 L8.4 9.1 L2 16.2" fill="none" stroke="#9b9b9b" stroke-width="2.6" stroke-linecap="round" stroke-linejoin="round"/></svg>
<svg class="ic" style="left:250px;top:1009px" width="33" height="32" viewBox="0 0 33 32" ><defs><clipPath id="c53"><rect x="0" y="0" width="30" height="29" rx="4"/></clipPath><linearGradient id="g54" x1="0" y1="0" x2="1" y2="1"><stop offset="0" stop-color="#a6cdf8"/><stop offset="1" stop-color="#4a90e8"/></linearGradient></defs><g clip-path="url(#c53)"><rect x="0.00" y="8.00" width="9.80" height="7.50" fill="#e8f2fe"/><rect x="9.30" y="8.00" width="11.90" height="7.50" fill="#d3e6fc"/><rect x="20.70" y="8.00" width="9.80" height="7.50" fill="#b5d4f9"/><rect x="0.00" y="15.00" width="9.80" height="7.50" fill="#d6e7fc"/><rect x="9.30" y="15.00" width="11.90" height="7.50" fill="#b6d5f9"/><rect x="20.70" y="15.00" width="9.80" height="7.50" fill="#a1caf7"/><rect x="0.00" y="22.00" width="9.80" height="7.50" fill="#bbd8fa"/><rect x="9.30" y="22.00" width="11.90" height="7.50" fill="#a4ccf7"/><rect x="20.70" y="22.00" width="9.80" height="7.50" fill="#8fc0f6"/><rect x="0" y="0" width="30" height="8" fill="url(#g54)"/></g><path d="M13 25.8 H26" stroke="#2f6fc8" stroke-width="2.6"/><circle cx="12.2" cy="25.8" r="3.7" fill="#fff" stroke="#2f6fc8" stroke-width="3.2"/><circle cx="26.4" cy="25.8" r="3.7" fill="#fff" stroke="#2f6fc8" stroke-width="3.2"/></svg>
<svg class="ic" style="left:216.7px;top:1058.3px" width="12.4" height="18.2" viewBox="0 0 12.4 18.2" ><path d="M2 2 L8.4 9.1 L2 16.2" fill="none" stroke="#9b9b9b" stroke-width="2.6" stroke-linecap="round" stroke-linejoin="round"/></svg>
<svg class="ic" style="left:250px;top:1053px" width="33" height="34" viewBox="0 0 33 34" ><g transform="translate(3.2,24.6) scale(1.2,1)"><text x="0" y="0" font-family="DejaVu Sans Light, DejaVu Sans, sans-serif" font-weight="200" font-style="italic" font-size="31.3" fill="#3f8ff0" stroke="#3f8ff0" stroke-width="2" stroke-linejoin="round">ƒ</text></g><path d="M20.6 20 L29.4 29 M29.4 20 L20.6 29" stroke="#3f8ff0" stroke-width="3.2" stroke-linecap="round"/></svg>
<svg class="ic" style="left:216.7px;top:1102.3px" width="12.4" height="18.2" viewBox="0 0 12.4 18.2" ><path d="M2 2 L8.4 9.1 L2 16.2" fill="none" stroke="#9b9b9b" stroke-width="2.6" stroke-linecap="round" stroke-linejoin="round"/></svg>
<svg class="ic" style="left:250px;top:1097px" width="32" height="32" viewBox="0 0 32 32" ><circle cx="16" cy="16" r="15.2" fill="#5fae35"/><circle cx="16" cy="16" r="14" fill="#78c440"/><circle cx="16" cy="16" r="11.3" fill="#f4f4ee"/><path d="M16 6.5 V16 H8.5" fill="none" stroke="#222" stroke-width="1.6"/><path d="M11.5 13 L22 22.5" stroke="#e0582c" stroke-width="1.4"/><circle cx="16" cy="16" r="2" fill="#222"/></svg>
<svg class="ic" style="left:216.7px;top:1146.3px" width="12.4" height="18.2" viewBox="0 0 12.4 18.2" ><path d="M2 2 L8.4 9.1 L2 16.2" fill="none" stroke="#9b9b9b" stroke-width="2.6" stroke-linecap="round" stroke-linejoin="round"/></svg>
<svg class="ic" style="left:250px;top:1141px" width="32" height="32" viewBox="0 0 32 32" ><g transform="translate(12,0)"><defs><clipPath id="c55"><rect x="0" y="0" width="20" height="20" rx="3"/></clipPath><linearGradient id="g56" x1="0" y1="0" x2="1" y2="1"><stop offset="0" stop-color="#ea754f"/><stop offset="1" stop-color="#c8532d"/></linearGradient></defs><g clip-path="url(#c55)"><rect x="0.00" y="5.50" width="6.70" height="5.33" fill="#fbe7e0"/><rect x="6.20" y="5.50" width="8.10" height="5.33" fill="#f9d5c8"/><rect x="13.80" y="5.50" width="6.70" height="5.33" fill="#f6c1b0"/><rect x="0.00" y="10.33" width="6.70" height="5.33" fill="#f9d8cc"/><rect x="6.20" y="10.33" width="8.10" height="5.33" fill="#f6c0ae"/><rect x="13.80" y="10.33" width="6.70" height="5.33" fill="#f3ac97"/><rect x="0.00" y="15.17" width="6.70" height="5.33" fill="#f6c4b3"/><rect x="6.20" y="15.17" width="8.10" height="5.33" fill="#f3ad98"/><rect x="13.80" y="15.17" width="6.70" height="5.33" fill="#f09a82"/><rect x="0" y="0" width="20" height="5.5" fill="url(#g56)"/></g></g><g transform="translate(0,12)"><defs><clipPath id="c57"><rect x="0" y="0" width="20" height="20" rx="3"/></clipPath><linearGradient id="g58" x1="0" y1="0" x2="1" y2="1"><stop offset="0" stop-color="#3f88e0"/><stop offset="1" stop-color="#2a66c4"/></linearGradient></defs><g clip-path="url(#c57)"><rect x="0.00" y="5.50" width="6.70" height="5.33" fill="#e8f2fe"/><rect x="6.20" y="5.50" width="8.10" height="5.33" fill="#d3e6fc"/><rect x="13.80" y="5.50" width="6.70" height="5.33" fill="#b5d4f9"/><rect x="0.00" y="10.33" width="6.70" height="5.33" fill="#d6e7fc"/><rect x="6.20" y="10.33" width="8.10" height="5.33" fill="#b6d5f9"/><rect x="13.80" y="10.33" width="6.70" height="5.33" fill="#a1caf7"/><rect x="0.00" y="15.17" width="6.70" height="5.33" fill="#bbd8fa"/><rect x="6.20" y="15.17" width="8.10" height="5.33" fill="#a4ccf7"/><rect x="13.80" y="15.17" width="6.70" height="5.33" fill="#8fc0f6"/><rect x="0" y="0" width="20" height="5.5" fill="url(#g58)"/></g></g></svg>
<svg class="ic" style="left:216.7px;top:1190.3px" width="12.4" height="18.2" viewBox="0 0 12.4 18.2" ><path d="M2 2 L8.4 9.1 L2 16.2" fill="none" stroke="#9b9b9b" stroke-width="2.6" stroke-linecap="round" stroke-linejoin="round"/></svg>
<svg class="ic" style="left:252px;top:1185px" width="26" height="32" viewBox="0 0 26 32" ><defs><linearGradient id="g59" x1="0" y1="0" x2="1" y2="1"><stop offset="0" stop-color="#9399a1"/><stop offset="1" stop-color="#676d76"/></linearGradient></defs><rect x="0" y="4" width="26" height="28" rx="4" fill="#565c64"/><rect x="0" y="0" width="26" height="27" rx="4" fill="url(#g59)"/><path d="M8.2 14.2 A5.6 5.6 0 1 1 10.4 18.6" fill="none" stroke="#fff" stroke-width="2"/><path d="M4.4 12.2 L11.4 12.2 L8 16.8 Z" fill="#fff"/></svg>
<svg class="ic" style="left:216px;top:1229px" width="28" height="32" viewBox="0 0 28 32" ><path d="M0 22 V27.5 A14 4.5 0 0 0 28 27.5 V22 Z" fill="#626973"/><path d="M0 13 V22 A14 4.5 0 0 0 28 22 V13 Z" fill="#7c838e"/><path d="M0 4.5 V13.5 A14 4.5 0 0 0 28 13.5 V4.5 Z" fill="#9a9ea7"/><ellipse cx="14" cy="4.5" rx="14" ry="4.5" fill="#babdc3"/></svg>
<svg class="ic" style="left:216px;top:1273px" width="28" height="32" viewBox="0 0 28 32" ><path d="M0 22 V27.5 A14 4.5 0 0 0 28 27.5 V22 Z" fill="#626973"/><path d="M0 13 V22 A14 4.5 0 0 0 28 22 V13 Z" fill="#7c838e"/><path d="M0 4.5 V13.5 A14 4.5 0 0 0 28 13.5 V4.5 Z" fill="#9a9ea7"/><ellipse cx="14" cy="4.5" rx="14" ry="4.5" fill="#babdc3"/></svg>
<svg class="ic" style="left:216px;top:1317px" width="28" height="32" viewBox="0 0 28 32" ><path d="M0 22 V27.5 A14 4.5 0 0 0 28 27.5 V22 Z" fill="#626973"/><path d="M0 13 V22 A14 4.5 0 0 0 28 22 V13 Z" fill="#7c838e"/><path d="M0 4.5 V13.5 A14 4.5 0 0 0 28 13.5 V4.5 Z" fill="#9a9ea7"/><ellipse cx="14" cy="4.5" rx="14" ry="4.5" fill="#babdc3"/></svg>
<svg class="ic" style="left:130px;top:1708px" width="16" height="32" viewBox="0 0 16 32" ><path d="M8 0 V4 M8 28 V32" stroke="#f0f0f0" stroke-width="2.6"/><path d="M2.4 12.5 V9.8 A5.55 5.55 0 0 1 13.5 9.8 V12.5 Z" fill="none" stroke="#f0f0f0" stroke-width="2.7" stroke-linejoin="miter"/><path d="M2.4 19.3 H13.5 V22 A5.55 5.55 0 0 1 2.4 22 Z" fill="none" stroke="#f0f0f0" stroke-width="2.7"/><path d="M5.2 15.8 V19.3 M10.8 15.8 V19.3" stroke="#f0f0f0" stroke-width="2.4"/></svg>
<div class="r" style="left:165.8px;top:1704.2px;width:404.2px;height:39.6px;background:#4d4d4d;border-radius:9px;box-shadow:inset 0 -1.5px 0 #6e6e6e,inset 0 0 0 1.2px #585858"></div>
<svg class="ic" style="left:179.5px;top:1711.5px" width="27" height="27" viewBox="0 0 27 27" ><circle cx="10.65" cy="10.4" r="8.95" fill="none" stroke="#e0e0e0" stroke-width="2.5"/><path d="M17.2 17.2 L24 24.2" stroke="#e0e0e0" stroke-width="3.3" stroke-linecap="round"/></svg>
<div class="r" style="left:780px;top:238px;width:1.6px;height:58px;background:#a8a8a8;"></div>
<div class="r" style="left:781.6px;top:238px;width:438px;height:58px;background:#1e1f1f;"></div>
<div class="r" style="left:1219.6px;top:238px;width:1.6px;height:58px;background:#a8a8a8;"></div>
<svg class="ic" style="left:861.3px;top:249.8px" width="29.2" height="32.6" viewBox="0 0 93 104.5" ><defs><linearGradient id="g60" x1="0" y1="0" x2="0" y2="1"><stop offset="0" stop-color="#f5cd46"/><stop offset="1" stop-color="#e9ad3a"/></linearGradient><linearGradient id="g61" x1="0" y1="0" x2="0" y2="1"><stop offset="0.55" stop-color="#fbe6d6"/><stop offset="1" stop-color="#f6d9c3"/></linearGradient></defs><path d="M6.1 104.5 Q0.8 104.5 0.8 99 C0.8 82 18 71 36 66 L56.5 66 C74.5 71 92.5 82 92.5 99 Q92.5 104.5 87 104.5 Z" fill="url(#g60)"/><path d="M37 58 V66 Q46.2 78.4 55.4 66 V58 Z" fill="#f8e0ce"/><ellipse cx="20.6" cy="40.4" rx="4.7" ry="8.4" fill="#f9e1ce"/><ellipse cx="72" cy="40.4" rx="4.7" ry="8.4" fill="#f9e1ce"/><ellipse cx="46.3" cy="40.5" rx="24.6" ry="27.2" fill="url(#g61)"/><path d="M20.4 32.2 C19 12 31 0.3 46.2 0.3 C62 0.3 74 12 72.7 32.2 C60 30.5 45 27 33.4 18.5 C31 23.5 26 29.5 22.7 32.2 Z" fill="#945b2a"/></svg>
<svg class="ic" style="left:624.8px;top:320.3px" width="32" height="32" viewBox="0 0 32 32" ><path d="M5.5 1.2 H22.3 L30.8 9.7 V26.5 Q30.8 30.8 26.5 30.8 H5.5 Q1.2 30.8 1.2 26.5 V5.5 Q1.2 1.2 5.5 1.2 Z" fill="none" stroke="#8e8e8e" stroke-width="2.2"/><path d="M7.3 2.4 V8 Q7.3 11.2 10.5 11.2 H17.5 Q20.7 11.2 20.7 8 V2.4" fill="none" stroke="#4a9cf5" stroke-width="2.3"/><path d="M16 4.3 V7.8" stroke="#8e8e8e" stroke-width="2"/><path d="M7.3 29.6 V21 Q7.3 17.6 10.7 17.6 H22.3 Q25.7 17.6 25.7 21 V29.6" fill="none" stroke="#4a9cf5" stroke-width="2.3"/><path d="M13 23.2 H21 M13 27.4 H21" stroke="#8e8e8e" stroke-width="2"/></svg>
<div class="r" style="left:688.2px;top:314px;width:1.8px;height:40px;background:#636363;"></div>
<svg class="ic" style="left:720.8px;top:320.3px" width="33" height="32" viewBox="0 0 33 32" ><path d="M7 9.5 V7.5 A6.2 6.2 0 0 1 19.4 7.5 V9.5" fill="none" stroke="#8a8a8a" stroke-width="2"/><path d="M13 27 H4.5 Q1 27 1 23.5 V13 Q1 9.6 4.5 9.6 H22 Q25 9.6 25.6 12.6" fill="none" stroke="#8a8a8a" stroke-width="2"/><circle cx="23.4" cy="23" r="7.9" fill="none" stroke="#5fc73b" stroke-width="2.4"/><path d="M18.6 23 H28.2 M23.4 18.2 V27.8" stroke="#5fc73b" stroke-width="2.3"/></svg>
<div class="r" style="left:594px;top:368.6px;width:1590px;height:1.6px;background:#565656;"></div>
<div class="r" style="left:594px;top:437px;width:1590px;height:1.6px;background:#4e4e4e;"></div>
<div class="r" style="left:594px;top:494.2px;width:1590px;height:1.6px;background:#3c3c3c;"></div>
<div class="r" style="left:1610.9px;top:380.3px;width:230.1px;height:39.6px;background:#3b79f2;border-radius:6px"></div>
<div class="r" style="left:667.9000000000001px;top:452.5px;width:1.6px;height:31px;background:#464646;"></div>
<div class="r" style="left:874.0px;top:452.5px;width:1.6px;height:31px;background:#464646;"></div>
<div class="r" style="left:1080.1000000000001px;top:452.5px;width:1.6px;height:31px;background:#464646;"></div>
<div class="r" style="left:1246.1000000000001px;top:452.5px;width:1.6px;height:31px;background:#464646;"></div>
<div class="r" style="left:1412.2px;top:452.5px;width:1.6px;height:31px;background:#464646;"></div>
<div class="r" style="left:1578.2px;top:452.5px;width:1.6px;height:31px;background:#464646;"></div>
<div class="r" style="left:1744.3px;top:452.5px;width:1.6px;height:31px;background:#464646;"></div>
<div class="r" style="left:1910.4px;top:452.5px;width:1.6px;height:31px;background:#464646;"></div>
<div class="r" style="left:2076.5px;top:452.5px;width:1.6px;height:31px;background:#464646;"></div>
<svg class="ic" style="left:620.2px;top:498px" width="32" height="32" viewBox="0 0 32 32" ><defs><clipPath id="c62"><rect x="0" y="0" width="32" height="32" rx="5"/></clipPath><linearGradient id="g63" x1="0" y1="0" x2="1" y2="1"><stop offset="0" stop-color="#3f88e0"/><stop offset="1" stop-color="#2a66c4"/></linearGradient></defs><g clip-path="url(#c62)"><rect x="0.00" y="8.64" width="10.42" height="8.29" fill="#e8f2fe"/><rect x="9.92" y="8.64" width="12.66" height="8.29" fill="#d3e6fc"/><rect x="22.08" y="8.64" width="10.42" height="8.29" fill="#b5d4f9"/><rect x="0.00" y="16.43" width="10.42" height="8.29" fill="#d6e7fc"/><rect x="9.92" y="16.43" width="12.66" height="8.29" fill="#b6d5f9"/><rect x="22.08" y="16.43" width="10.42" height="8.29" fill="#a1caf7"/><rect x="0.00" y="24.21" width="10.42" height="8.29" fill="#bbd8fa"/><rect x="9.92" y="24.21" width="12.66" height="8.29" fill="#a4ccf7"/><rect x="22.08" y="24.21" width="10.42" height="8.29" fill="#8fc0f6"/><rect x="0" y="0" width="32" height="8.64" fill="url(#g63)"/></g></svg>
<svg class="ic" style="left:620.2px;top:536px" width="32" height="32" viewBox="0 0 32 32" ><defs><clipPath id="c64"><rect width="32" height="32" rx="3"/></clipPath></defs><g clip-path="url(#c64)"><rect x="0.00" y="0.00" width="10.32" height="8.40" fill="#ececec"/><rect x="9.92" y="0.00" width="12.56" height="8.40" fill="#b9d8fb"/><rect x="22.08" y="0.00" width="10.32" height="8.40" fill="#ececec"/><rect x="0.00" y="8.00" width="10.32" height="8.40" fill="#d6d6d6"/><rect x="9.92" y="8.00" width="12.56" height="8.40" fill="#93c1f6"/><rect x="22.08" y="8.00" width="10.32" height="8.40" fill="#d6d6d6"/><rect x="0.00" y="16.00" width="10.32" height="8.40" fill="#bebebe"/><rect x="9.92" y="16.00" width="12.56" height="8.40" fill="#74aff2"/><rect x="22.08" y="16.00" width="10.32" height="8.40" fill="#bebebe"/><rect x="0.00" y="24.00" width="10.32" height="8.40" fill="#ababab"/><rect x="9.92" y="24.00" width="12.56" height="8.40" fill="#5a9fee"/><rect x="22.08" y="24.00" width="10.32" height="8.40" fill="#ababab"/></g></svg>
<div class="r" style="left:1086.0px;top:501px;width:28px;height:28px;background:#dcdce0;border-radius:5.5px"></div>
<div class="r" style="left:1088.0px;top:539px;width:28px;height:28px;background:linear-gradient(#2d2f2f,#363838 50%,#464747);border-radius:7px"></div>
<div class="r" style="left:1254.0px;top:501px;width:28px;height:28px;background:linear-gradient(#2d2f2f,#363838 50%,#464747);border-radius:7px"></div>
<div class="r" style="left:1254.0px;top:539px;width:28px;height:28px;background:linear-gradient(#2d2f2f,#363838 50%,#464747);border-radius:7px"></div>
<div class="r" style="left:1418.1px;top:501px;width:28px;height:28px;background:#dcdce0;border-radius:5.5px"></div>
<div class="r" style="left:1420.1px;top:539px;width:28px;height:28px;background:linear-gradient(#2d2f2f,#363838 50%,#464747);border-radius:7px"></div>
<div class="r" style="left:1586.1px;top:501px;width:28px;height:28px;background:linear-gradient(#2d2f2f,#363838 50%,#464747);border-radius:7px"></div>
<div class="r" style="left:1586.1px;top:539px;width:28px;height:28px;background:linear-gradient(#2d2f2f,#363838 50%,#464747);border-radius:7px"></div>
<div class="r" style="left:1752.1999999999998px;top:501px;width:28px;height:28px;background:linear-gradient(#2d2f2f,#363838 50%,#464747);border-radius:7px"></div>
<div class="r" style="left:1752.1999999999998px;top:539px;width:28px;height:28px;background:linear-gradient(#2d2f2f,#363838 50%,#464747);border-radius:7px"></div>
<div class="r" style="left:1916.3px;top:501px;width:28px;height:28px;background:#dcdce0;border-radius:5.5px"></div>
<div class="r" style="left:1918.3px;top:539px;width:28px;height:28px;background:linear-gradient(#2d2f2f,#363838 50%,#464747);border-radius:7px"></div>
<div class="r" style="left:2082.4px;top:501px;width:28px;height:28px;background:#dcdce0;border-radius:5.5px"></div>
<div class="r" style="left:2084.4px;top:539px;width:28px;height:28px;background:linear-gradient(#2d2f2f,#363838 50%,#464747);border-radius:7px"></div>
<svg class="ic" style="left:2553.9px;top:249px" width="33.4" height="33" viewBox="0 0 33.4 33" ><circle cx="16.6" cy="16.5" r="13.95" fill="none" stroke="#3d86f6" stroke-width="4.2"/><text x="16.6" y="24.1" text-anchor="middle" font-family="Liberation Sans, sans-serif" font-size="22.5" font-weight="700" fill="#3d86f6" stroke="#3d86f6" stroke-width="0.8">i</text></svg>
<svg class="ic" style="left:2605px;top:252px" width="28.2" height="28" viewBox="0 0 28.2 28" ><rect x="1.1" y="1.1" width="25.9" height="25.8" fill="none" stroke="#5c5c5c" stroke-width="2.2"/><text x="4.9" y="17.1" textLength="19.2" lengthAdjust="spacingAndGlyphs" font-family="Liberation Sans, sans-serif" font-size="11" font-weight="700" fill="#5c5c5c" stroke="#5c5c5c" stroke-width="0.5">DDL</text></svg>
<svg class="ic" style="left:2654px;top:252px" width="27" height="28" viewBox="0 0 27 28" ><path d="M7.4 11 V7.3 A5.7 5.7 0 0 1 18.8 7.3 V11" fill="none" stroke="#5c5c5c" stroke-width="2.6"/><rect x="0" y="9.9" width="26.2" height="18.1" rx="4" fill="#5c5c5c"/><circle cx="13.1" cy="16.7" r="3.1" fill="#262828"/><rect x="12" y="17" width="2.2" height="6.4" fill="#262828"/></svg>
<svg class="ic" style="left:2243.7px;top:359.6px" width="92.5" height="104.5" viewBox="0 0 93 104.5" ><defs><linearGradient id="g65" x1="0" y1="0" x2="0" y2="1"><stop offset="0" stop-color="#f5cd46"/><stop offset="1" stop-color="#e9ad3a"/></linearGradient><linearGradient id="g66" x1="0" y1="0" x2="0" y2="1"><stop offset="0.55" stop-color="#fbe6d6"/><stop offset="1" stop-color="#f6d9c3"/></linearGradient></defs><path d="M6.1 104.5 Q0.8 104.5 0.8 99 C0.8 82 18 71 36 66 L56.5 66 C74.5 71 92.5 82 92.5 99 Q92.5 104.5 87 104.5 Z" fill="url(#g65)"/><path d="M37 58 V66 Q46.2 78.4 55.4 66 V58 Z" fill="#f8e0ce"/><ellipse cx="20.6" cy="40.4" rx="4.7" ry="8.4" fill="#f9e1ce"/><ellipse cx="72" cy="40.4" rx="4.7" ry="8.4" fill="#f9e1ce"/><ellipse cx="46.3" cy="40.5" rx="24.6" ry="27.2" fill="url(#g66)"/><path d="M20.4 32.2 C19 12 31 0.3 46.2 0.3 C62 0.3 74 12 72.7 32.2 C60 30.5 45 27 33.4 18.5 C31 23.5 26 29.5 22.7 32.2 Z" fill="#945b2a"/></svg>
<svg class="ic" style="left:2235.2px;top:516.8px" width="34" height="32" viewBox="0 0 34 32" ><g transform="translate(1.2,1.2)"><path d="M22.40 16.90 C23.02 17.02 24.98 17.10 26.10 17.60 C27.22 18.10 28.28 19.03 29.10 19.90 C29.92 20.77 30.68 22.32 31.00 22.80 C29.97 23.12 25.83 24.38 24.80 24.70 C25.52 25.27 28.38 27.53 29.10 28.10 C28.93 28.33 29.37 29.27 28.10 29.50 C26.83 29.73 23.48 29.95 21.50 29.50 C19.52 29.05 17.75 27.85 16.20 26.80 C14.65 25.75 13.25 24.35 12.20 23.20 C11.15 22.05 10.28 20.45 9.90 19.90 C9.68 20.38 9.10 22.20 8.60 22.80 C8.10 23.40 7.52 23.65 6.90 23.50 C6.28 23.35 5.33 22.78 4.90 21.90 C4.47 21.02 4.30 19.32 4.30 18.20 C4.30 17.08 4.58 15.97 4.90 15.20 C5.22 14.43 5.98 13.87 6.20 13.60 C5.82 13.22 4.55 12.47 3.90 11.30 C3.25 10.13 2.90 7.82 2.30 6.60 C1.70 5.38 0.68 4.77 0.30 4.00 C-0.08 3.23 -0.05 2.50 0.00 2.00 C0.05 1.50 -0.00 1.33 0.60 1.00 C1.20 0.67 2.33 -0.28 3.60 0.00 C4.87 0.28 6.77 2.15 8.20 2.70 C9.63 3.25 10.87 2.82 12.20 3.30 C13.53 3.78 14.98 4.50 16.20 5.60 C17.42 6.70 18.62 8.52 19.50 9.90 C20.38 11.28 21.02 12.73 21.50 13.90 C21.98 15.07 22.25 16.40 22.40 16.90 Z" fill="none" stroke="#737373" stroke-width="1.9" stroke-linejoin="round"/><path d="M8.0 6.5 Q10.2 6.6 10.6 9.0 Q9.2 7.6 8.0 6.5 Z" fill="#737373"/></g></svg>
<span class="t" style="left:1464.50px;top:89.14px;font-size:27px;color:#ffffff;letter-spacing:0.244px;font-weight:700;-webkit-text-stroke:0.25px #fff">test@% (localmysql)</span>
<span class="t" style="left:1740.90px;top:89.99px;font-size:26px;color:#7e7e7e;letter-spacing:0.000px;;transform:scaleX(0.785);transform-origin:0 0">—</span>
<span class="t" style="left:1769.30px;top:89.99px;font-size:26px;color:#7e7e7e;letter-spacing:0.768px;-webkit-text-stroke:0.3px #7e7e7e">Edited</span>
<span class="t" style="left:129.80px;top:205.98px;font-size:22px;color:#9c9c9c;letter-spacing:1.082px;-webkit-text-stroke:0.5px #9c9c9c">Connection</span>
<span class="t" style="left:279.10px;top:205.98px;font-size:22px;color:#9c9c9c;letter-spacing:0.608px;-webkit-text-stroke:0.5px #9c9c9c">New Query</span>
<span class="t" style="left:486.20px;top:205.98px;font-size:22px;color:#9c9c9c;letter-spacing:0.410px;-webkit-text-stroke:0.5px #9c9c9c">Table</span>
<span class="t" style="left:598.20px;top:205.98px;font-size:22px;color:#9c9c9c;letter-spacing:0.800px;-webkit-text-stroke:0.5px #9c9c9c">View</span>
<span class="t" style="left:692.20px;top:205.98px;font-size:22px;color:#9c9c9c;letter-spacing:1.008px;-webkit-text-stroke:0.5px #9c9c9c">Function</span>
<span class="t" style="left:927.70px;top:205.98px;font-size:22px;color:#9c9c9c;letter-spacing:0.856px;-webkit-text-stroke:0.5px #9c9c9c">Others</span>
<span class="t" style="left:1040.60px;top:205.98px;font-size:22px;color:#9c9c9c;letter-spacing:0.798px;-webkit-text-stroke:0.5px #9c9c9c">Query</span>
<span class="t" style="left:1143.70px;top:205.98px;font-size:22px;color:#9c9c9c;letter-spacing:0.751px;-webkit-text-stroke:0.5px #9c9c9c">Backup</span>
<span class="t" style="left:1252.40px;top:205.98px;font-size:22px;color:#9c9c9c;letter-spacing:0.916px;-webkit-text-stroke:0.5px #9c9c9c">Automation</span>
<span class="t" style="left:1408.90px;top:205.98px;font-size:22px;color:#9c9c9c;letter-spacing:1.192px;-webkit-text-stroke:0.5px #9c9c9c">Model</span>
<span class="t" style="left:1516.00px;top:205.98px;font-size:22px;color:#9c9c9c;letter-spacing:0.821px;-webkit-text-stroke:0.5px #9c9c9c">Charts</span>
<span class="t" style="left:2768.60px;top:205.98px;font-size:22px;color:#9c9c9c;letter-spacing:0.667px;-webkit-text-stroke:0.5px #9c9c9c">View</span>
<span class="t" style="left:828.20px;top:205.98px;font-size:22px;color:#3b84f7;letter-spacing:0.892px;-webkit-text-stroke:0.5px #3b84f7">User</span>
<span class="t" style="left:217.80px;top:261.99px;font-size:26px;color:#e3e3e3;letter-spacing:-0.232px;-webkit-text-stroke:0.35px #e3e3e3">localmysql</span>
<span class="t" style="left:253.60px;top:305.99px;font-size:26px;color:#e3e3e3;letter-spacing:-0.283px;-webkit-text-stroke:0.35px #e3e3e3">ebean_test</span>
<span class="t" style="left:254.20px;top:349.99px;font-size:26px;color:#e3e3e3;letter-spacing:-0.297px;-webkit-text-stroke:0.35px #e3e3e3">information_schema</span>
<span class="t" style="left:254.30px;top:393.99px;font-size:26px;color:#e3e3e3;letter-spacing:-0.530px;-webkit-text-stroke:0.35px #e3e3e3">mysql</span>
<span class="t" style="left:253.60px;top:437.99px;font-size:26px;color:#e3e3e3;letter-spacing:-0.369px;-webkit-text-stroke:0.35px #e3e3e3">onlineOrder</span>
<span class="t" style="left:254.30px;top:481.99px;font-size:26px;color:#e3e3e3;letter-spacing:-0.388px;-webkit-text-stroke:0.35px #e3e3e3">performance_schema</span>
<span class="t" style="left:254.70px;top:525.99px;font-size:26px;color:#e3e3e3;letter-spacing:-0.120px;-webkit-text-stroke:0.35px #e3e3e3">staybooking</span>
<span class="t" style="left:254.70px;top:569.99px;font-size:26px;color:#e3e3e3;letter-spacing:-0.186px;-webkit-text-stroke:0.35px #e3e3e3">study</span>
<span class="t" style="left:290.90px;top:613.99px;font-size:26px;color:#e3e3e3;letter-spacing:-0.891px;-webkit-text-stroke:0.35px #e3e3e3">Tables</span>
<span class="t" style="left:326.80px;top:657.99px;font-size:26px;color:#e3e3e3;letter-spacing:-0.294px;-webkit-text-stroke:0.35px #e3e3e3">student</span>
<span class="t" style="left:326.80px;top:701.99px;font-size:26px;color:#e3e3e3;letter-spacing:-0.411px;-webkit-text-stroke:0.35px #e3e3e3">teach</span>
<span class="t" style="left:326.80px;top:745.99px;font-size:26px;color:#e3e3e3;letter-spacing:-0.544px;-webkit-text-stroke:0.35px #e3e3e3">teacher</span>
<span class="t" style="left:361.80px;top:789.99px;font-size:26px;color:#e3e3e3;letter-spacing:-0.731px;-webkit-text-stroke:0.35px #e3e3e3">Fields</span>
<span class="t" style="left:361.80px;top:833.99px;font-size:26px;color:#e3e3e3;letter-spacing:-0.961px;-webkit-text-stroke:0.35px #e3e3e3">Indexes</span>
<span class="t" style="left:361.80px;top:877.99px;font-size:26px;color:#e3e3e3;letter-spacing:-0.807px;-webkit-text-stroke:0.35px #e3e3e3">Foreign Keys</span>
<span class="t" style="left:361.90px;top:921.99px;font-size:26px;color:#e3e3e3;letter-spacing:-0.839px;-webkit-text-stroke:0.35px #e3e3e3">Checks</span>
<span class="t" style="left:362.90px;top:965.99px;font-size:26px;color:#e3e3e3;letter-spacing:-0.556px;-webkit-text-stroke:0.35px #e3e3e3">Triggers</span>
<span class="t" style="left:290.20px;top:1009.99px;font-size:26px;color:#e3e3e3;letter-spacing:-0.971px;-webkit-text-stroke:0.35px #e3e3e3">Views</span>
<span class="t" style="left:289.70px;top:1053.99px;font-size:26px;color:#e3e3e3;letter-spacing:-0.353px;-webkit-text-stroke:0.35px #e3e3e3">Functions</span>
<span class="t" style="left:289.70px;top:1097.99px;font-size:26px;color:#e3e3e3;letter-spacing:-0.957px;-webkit-text-stroke:0.35px #e3e3e3">Events</span>
<span class="t" style="left:289.70px;top:1141.99px;font-size:26px;color:#e3e3e3;letter-spacing:-0.740px;-webkit-text-stroke:0.35px #e3e3e3">Queries</span>
<span class="t" style="left:289.70px;top:1185.99px;font-size:26px;color:#e3e3e3;letter-spacing:-0.720px;-webkit-text-stroke:0.35px #e3e3e3">Backups</span>
<span class="t" style="left:254.70px;top:1229.99px;font-size:26px;color:#e3e3e3;letter-spacing:-0.109px;-webkit-text-stroke:0.35px #e3e3e3">study2</span>
<span class="t" style="left:254.70px;top:1273.99px;font-size:26px;color:#e3e3e3;letter-spacing:-0.381px;-webkit-text-stroke:0.35px #e3e3e3">study4</span>
<span class="t" style="left:254.70px;top:1317.99px;font-size:26px;color:#e3e3e3;letter-spacing:-0.488px;-webkit-text-stroke:0.35px #e3e3e3">sys</span>
<span class="t" style="left:220.00px;top:1711.69px;font-size:26px;color:#838383;letter-spacing:0.516px;-webkit-text-stroke:0.4px #838383">Search</span>
<span class="t" style="left:642.60px;top:252.49px;font-size:26px;color:#f4f4f4;letter-spacing:-0.124px;-webkit-text-stroke:0.6px #f4f4f4;text-shadow:0 0 5px rgba(255,255,255,.55)">Objects</span>
<span class="t" style="left:904.30px;top:252.49px;font-size:26px;color:#f4f4f4;letter-spacing:-0.370px;-webkit-text-stroke:0.35px #f4f4f4;text-shadow:0 0 5px rgba(255,255,255,.55)">test@% (localmysql)</span>
<span class="t" style="left:785.80px;top:387.88px;font-size:24px;color:#efefef;letter-spacing:-0.575px;-webkit-text-stroke:0.45px #efefef">General</span>
<span class="t" style="left:914.40px;top:387.88px;font-size:24px;color:#efefef;letter-spacing:-0.387px;-webkit-text-stroke:0.45px #efefef">Members</span>
<span class="t" style="left:1062.50px;top:387.88px;font-size:24px;color:#efefef;letter-spacing:-0.362px;-webkit-text-stroke:0.45px #efefef">Members Of</span>
<span class="t" style="left:1243.50px;top:387.88px;font-size:24px;color:#efefef;letter-spacing:-0.428px;-webkit-text-stroke:0.45px #efefef">Advanced</span>
<span class="t" style="left:1399.90px;top:387.88px;font-size:24px;color:#efefef;letter-spacing:-0.306px;-webkit-text-stroke:0.45px #efefef">Server Privileges</span>
<span class="t" style="left:1636.00px;top:387.88px;font-size:24px;color:#ffffff;letter-spacing:-0.123px;-webkit-text-stroke:0.45px #ffffff">Object Privileges</span>
<span class="t" style="left:1871.00px;top:387.88px;font-size:24px;color:#efefef;letter-spacing:-0.832px;-webkit-text-stroke:0.45px #efefef">SQL Preview</span>
<span class="t" style="left:610.60px;top:457.18px;font-size:22px;color:#ffffff;letter-spacing:0.680px;-webkit-text-stroke:0.55px #fff">Type</span>
<span class="t" style="left:675.50px;top:457.18px;font-size:22px;color:#ffffff;letter-spacing:0.366px;-webkit-text-stroke:0.55px #fff">Schema</span>
<span class="t" style="left:881.40px;top:457.18px;font-size:22px;color:#ffffff;letter-spacing:0.417px;-webkit-text-stroke:0.55px #fff">Name</span>
<span class="t" style="left:1088.50px;top:457.18px;font-size:22px;color:#ffffff;letter-spacing:0.898px;-webkit-text-stroke:0.55px #fff">Alter</span>
<span class="t" style="left:1254.00px;top:457.18px;font-size:22px;color:#ffffff;letter-spacing:0.680px;-webkit-text-stroke:0.55px #fff">Alter Routine</span>
<span class="t" style="left:1419.40px;top:457.18px;font-size:22px;color:#ffffff;letter-spacing:0.581px;-webkit-text-stroke:0.55px #fff">Create</span>
<span class="t" style="left:1585.50px;top:457.18px;font-size:22px;color:#ffffff;letter-spacing:0.448px;-webkit-text-stroke:0.55px #fff">Create Routi...</span>
<span class="t" style="left:1751.50px;top:457.18px;font-size:22px;color:#ffffff;letter-spacing:0.549px;-webkit-text-stroke:0.55px #fff">Create Temp...</span>
<span class="t" style="left:1917.20px;top:457.18px;font-size:22px;color:#ffffff;letter-spacing:0.666px;-webkit-text-stroke:0.55px #fff">Create View</span>
<span class="t" style="left:2083.60px;top:457.18px;font-size:22px;color:#ffffff;letter-spacing:0.828px;-webkit-text-stroke:0.55px #fff">Delete</span>
<span class="t" style="left:676.50px;top:500.10px;font-size:28px;color:#dedede;letter-spacing:-0.331px;-webkit-text-stroke:0.35px #dedede">study</span>
<span class="t" style="left:882.90px;top:500.10px;font-size:28px;color:#dedede;letter-spacing:-0.211px;-webkit-text-stroke:0.35px #dedede">student</span>
<span class="t" style="left:676.50px;top:538.00px;font-size:28px;color:#dedede;letter-spacing:-0.331px;-webkit-text-stroke:0.35px #dedede">study</span>
<span class="t" style="left:882.90px;top:538.00px;font-size:28px;color:#dedede;letter-spacing:-0.309px;-webkit-text-stroke:0.35px #dedede">student(name)</span>
<span class="t" style="left:2384.80px;top:373.07px;font-size:28.5px;color:#ffffff;letter-spacing:0.000px;font-weight:700;-webkit-text-stroke:0.3px #fff;transform:scaleX(1.102);transform-origin:0 0">test@%</span>
<span class="t" style="left:2383.50px;top:415.49px;font-size:26px;color:#9b9b9b;letter-spacing:0.588px;-webkit-text-stroke:0.3px #9b9b9b">User</span>
<span class="t" style="left:2283.80px;top:518.60px;font-size:28px;color:#e2e2e2;letter-spacing:-0.276px;-webkit-text-stroke:0.35px #e2e2e2">localmysql</span>
<span class="t" style="left:2235.60px;top:599.14px;font-size:27px;color:#a2a2a2;letter-spacing:0.156px;font-weight:700;">User</span>
<span class="t" style="left:2236.60px;top:634.38px;font-size:24px;color:#ececec;letter-spacing:0.995px;-webkit-text-stroke:0.3px #ececec">test</span>
<span class="t" style="left:2235.60px;top:697.14px;font-size:27px;color:#a2a2a2;letter-spacing:0.331px;font-weight:700;">Host</span>
<span class="t" style="left:2236.60px;top:732.38px;font-size:24px;color:#ececec;letter-spacing:0.000px;-webkit-text-stroke:0.3px #ececec">%</span>
<span class="t" style="left:2235.60px;top:795.14px;font-size:27px;color:#a2a2a2;letter-spacing:-0.079px;font-weight:700;">Plugin</span>
<span class="t" style="left:2235.60px;top:830.38px;font-size:24px;color:#ececec;letter-spacing:0.824px;-webkit-text-stroke:0.3px #ececec">caching_sha2_password</span>
<span class="t" style="left:2235.60px;top:893.14px;font-size:27px;color:#a2a2a2;letter-spacing:-0.334px;font-weight:700;">Expire Password Policy</span>
<span class="t" style="left:2235.60px;top:928.38px;font-size:24px;color:#ececec;letter-spacing:-0.397px;-webkit-text-stroke:0.3px #ececec">DEFAULT</span>
<span class="t" style="left:2235.60px;top:991.14px;font-size:27px;color:#a2a2a2;letter-spacing:0.024px;font-weight:700;">Maximum Queries</span>
<span class="t" style="left:2236.60px;top:1026.38px;font-size:24px;color:#ececec;letter-spacing:0.000px;-webkit-text-stroke:0.3px #ececec">0</span>
<span class="t" style="left:2235.60px;top:1089.14px;font-size:27px;color:#a2a2a2;letter-spacing:0.183px;font-weight:700;">Maximum Updates</span>
<span class="t" style="left:2236.60px;top:1124.38px;font-size:24px;color:#ececec;letter-spacing:0.000px;-webkit-text-stroke:0.3px #ececec">0</span>
<span class="t" style="left:2235.60px;top:1187.14px;font-size:27px;color:#a2a2a2;letter-spacing:-0.040px;font-weight:700;">Maximum Connections</span>
<span class="t" style="left:2236.60px;top:1222.38px;font-size:24px;color:#ececec;letter-spacing:0.000px;-webkit-text-stroke:0.3px #ececec">0</span>
<span class="t" style="left:2235.60px;top:1285.14px;font-size:27px;color:#a2a2a2;letter-spacing:-0.037px;font-weight:700;">Maximum User Connections</span>
<span class="t" style="left:2236.60px;top:1320.38px;font-size:24px;color:#ececec;letter-spacing:0.000px;-webkit-text-stroke:0.3px #ececec">0</span>
<span class="t" style="left:2236.60px;top:1383.14px;font-size:27px;color:#a2a2a2;letter-spacing:-0.316px;font-weight:700;">SSL Type</span>
<span class="t" style="left:2235.60px;top:1418.38px;font-size:24px;color:#ececec;letter-spacing:-0.177px;-webkit-text-stroke:0.3px #ececec">NONE</span>
<span class="t" style="left:2236.60px;top:1481.14px;font-size:27px;color:#a2a2a2;letter-spacing:-0.490px;font-weight:700;">SSL Cipher</span>
<span class="t" style="left:2235.12px;top:1516.38px;font-size:24px;color:#ececec;letter-spacing:0.000px;-webkit-text-stroke:0.3px #ececec;transform:scaleX(1.479);transform-origin:0 0">--</span>
<span class="t" style="left:2235.60px;top:1579.14px;font-size:27px;color:#a2a2a2;letter-spacing:-0.108px;font-weight:700;">Issuer</span>
<span class="t" style="left:2235.12px;top:1614.38px;font-size:24px;color:#ececec;letter-spacing:0.000px;-webkit-text-stroke:0.3px #ececec;transform:scaleX(1.479);transform-origin:0 0">--</span>
<span class="t" style="left:2236.60px;top:1677.14px;font-size:27px;color:#a2a2a2;letter-spacing:-0.071px;font-weight:700;">Subject</span>
<span class="t" style="left:2235.12px;top:1712.38px;font-size:24px;color:#ececec;letter-spacing:0.000px;-webkit-text-stroke:0.3px #ececec;transform:scaleX(1.479);transform-origin:0 0">--</span>
</div></div>
<div class="edge"></div>
</body></html>
